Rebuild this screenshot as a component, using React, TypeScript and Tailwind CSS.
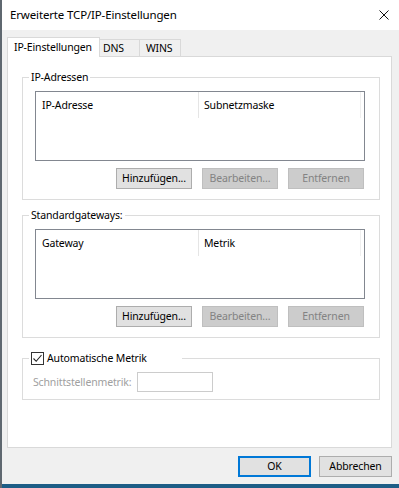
import React from "react";

const font = { fontFamily: '"Noto Sans", "Segoe UI", sans-serif' };
const txt = "text-[10.5px] tracking-[-0.15px] leading-none";

function Btn({ label, disabled, w = "w-[76px]" }: { label: string; disabled?: boolean; w?: string }) {
  return (
    <div
      className={
        "h-[21px] flex items-center justify-center border text-[10.5px] tracking-[-0.15px] leading-none " +
        w +
        " " +
        (disabled
          ? "bg-[#cccccc] border-[#bfbfbf] text-[#838383]"
          : "bg-[#e1e1e1] border-[#adadad] text-black")
      }
    >
      {label}
    </div>
  );
}

function ListGroup({ title, col1, col2 }: { title: string; col1: string; col2: string }) {
  return (
    <div className="relative border border-[#dcdcdc] pl-[12px] pr-[14px] pt-[13px] pb-[10px]">
      <div className={"absolute -top-[8px] left-[6px] px-[2px] bg-white h-[14px] flex items-center " + txt}>
        {title}
      </div>
      <div className="h-[70px] border border-[#828790] bg-white">
        <div className={"flex h-[26px] " + txt}>
          <div className="w-[163px] h-full flex items-center pl-[6px] border-r border-[#e5e5e5]">{col1}</div>
          <div className="w-[162px] h-full flex items-center pl-[5px] border-r border-[#efefef]">{col2}</div>
        </div>
      </div>
      <div className="flex justify-end gap-[10px] mt-[7px] pr-[1px]">
        <Btn label="Hinzufügen..." />
        <Btn label="Bearbeiten..." disabled />
        <Btn label="Entfernen" disabled />
      </div>
    </div>
  );
}

export default function App() {
  return (
    <div
      className="w-[399px] h-[488px] bg-[#f0f0f0] flex flex-col border-l-2 border-[#5f6870] text-black overflow-hidden"
      style={font}
    >
      {/* Title bar */}
      <div className="h-[30px] bg-white flex items-center justify-between pl-[8px] pr-[10px]">
        <span className="text-[11.5px] tracking-[-0.15px] leading-none">Erweiterte TCP/IP-Einstellungen</span>
        <svg width="10" height="10" viewBox="0 0 10 10" className="block">
          <path d="M0.5 0.5 L9.5 9.5 M9.5 0.5 L0.5 9.5" stroke="#111" strokeWidth="1" fill="none" />
        </svg>
      </div>

      {/* Tabs */}
      <div className="ml-[5px] mt-[7px] flex items-end h-[19px] relative z-10">
        <div className={"h-[20px] w-[93px] -mb-[1px] bg-white border border-b-0 border-[#d9d9d9] flex items-center pl-[6px] " + txt}>
          IP-Einstellungen
        </div>
        <div className={"h-[17px] w-[40px] border-t border-r border-[#d9d9d9] bg-[#f0f0f0] flex items-center pl-[3px] " + txt}>
          DNS
        </div>
        <div className={"h-[17px] w-[41px] border-t border-r border-[#d9d9d9] bg-[#f0f0f0] flex items-center pl-[6px] " + txt}>
          WINS
        </div>
      </div>

      {/* Panel */}
      <div className="ml-[5px] mr-[7px] h-[392px] bg-white border border-[#d9d9d9] pl-[14px] pr-[11px] pt-[20px] flex flex-col">
        <ListGroup title="IP-Adressen" col1="IP-Adresse" col2="Subnetzmaske" />
        <div className="mt-[15px]">
          <ListGroup title="Standardgateways:" col1="Gateway" col2="Metrik" />
        </div>

        <div className="mt-[20px] relative border border-[#dcdcdc] pl-[10px] pt-[13px] pb-[7px]">
          <div className={"absolute -top-[8px] left-[6px] w-[153px] px-[2px] bg-white h-[14px] flex items-center gap-[3px] " + txt}>
            <div className="w-[13px] h-[13px] border border-[#333333] bg-white flex items-center justify-center shrink-0">
              <svg width="11" height="11" viewBox="0 0 11 11" className="block">
                <path d="M1.5 5.5 L4.2 8.3 L9.5 2" stroke="#222" strokeWidth="1.1" fill="none" />
              </svg>
            </div>
            <span>Automatische Metrik</span>
          </div>
          <div className="flex items-center h-[20px]">
            <div className={"w-[104px] text-[#a0a0a0] " + txt}>Schnittstellenmetrik:</div>
            <div className="w-[76px] h-[20px] border border-[#cccccc] bg-white" />
          </div>
        </div>
      </div>

      {/* Footer */}
      <div className="mt-[8px] flex justify-end gap-[8px] pr-[7px]">
        <div className={"w-[73px] h-[21px] flex items-center justify-center bg-[#e1e1e1] border-2 border-[#0078d7] " + txt}>
          OK
        </div>
        <Btn label="Abbrechen" w="w-[73px]" />
      </div>

      <div className="mt-auto h-[4px] bg-[#1d5d86]" />
    </div>
  );
}
